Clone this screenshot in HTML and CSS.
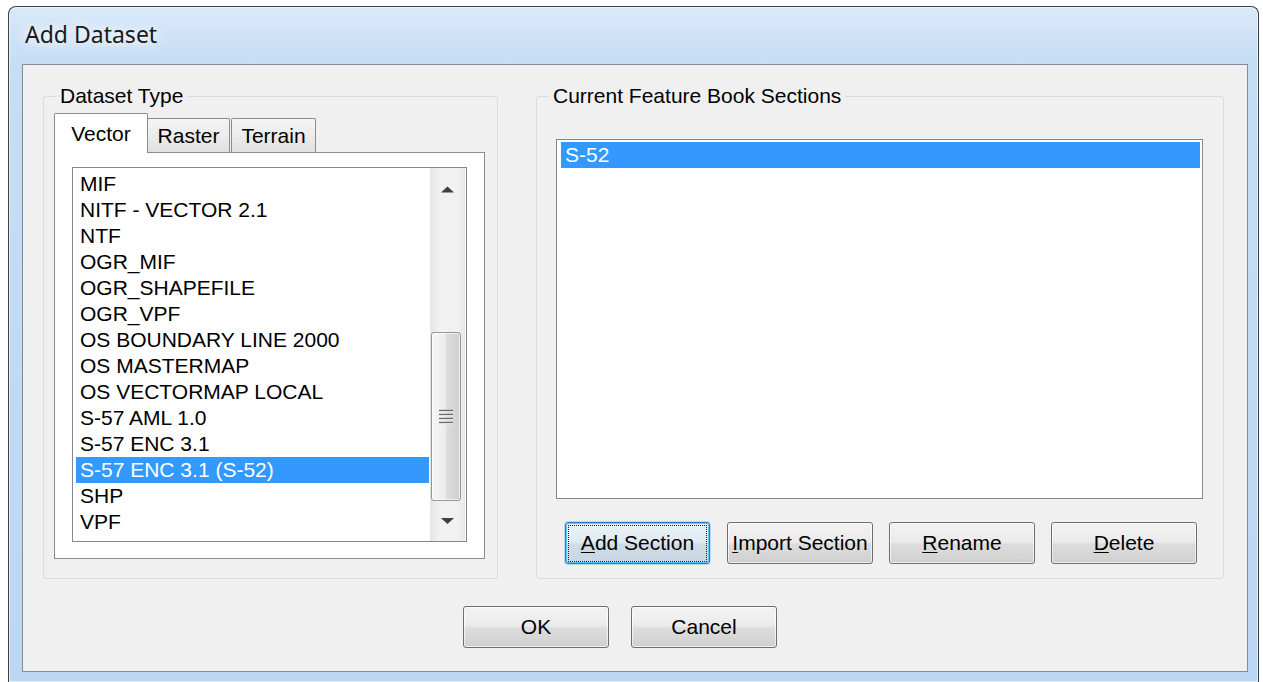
FILE: index.html
```html
<!DOCTYPE html>
<html lang="en">
<head>
<meta charset="utf-8">
<title>Add Dataset</title>
<link rel="stylesheet" href="styles.css">
</head>
<body>
<div class="window">
  <div class="titlebar"><span class="title">Add Dataset</span></div>
  <div class="client">
    <div class="groups">
      <fieldset class="group group-type">
        <legend>Dataset Type</legend>
        <div class="group-body type-body">
          <div class="tabs">
            <div class="tab active">Vector</div>
            <div class="tab tab-raster">Raster</div>
            <div class="tab tab-terrain">Terrain</div>
          </div>
          <div class="tab-panel">
            <div class="listbox type-list">
              <div class="items">
                <div class="item">MIF</div>
                <div class="item">NITF - VECTOR 2.1</div>
                <div class="item">NTF</div>
                <div class="item">OGR_MIF</div>
                <div class="item">OGR_SHAPEFILE</div>
                <div class="item">OGR_VPF</div>
                <div class="item">OS BOUNDARY LINE 2000</div>
                <div class="item">OS MASTERMAP</div>
                <div class="item">OS VECTORMAP LOCAL</div>
                <div class="item">S-57 AML 1.0</div>
                <div class="item">S-57 ENC 3.1</div>
                <div class="item selected">S-57 ENC 3.1 (S-52)</div>
                <div class="item">SHP</div>
                <div class="item">VPF</div>
              </div>
              <div class="vscroll">
                <div class="sb-btn">
                  <svg width="35" height="34" viewBox="0 0 35 34"><polygon points="11,24.5 17.5,18.5 24,24.5" fill="#3f3f3f"/></svg>
                </div>
                <div class="sb-gap"></div>
                <div class="sb-thumb">
                  <svg width="16" height="16" viewBox="0 0 16 16">
                    <g stroke="#fff" stroke-width="1.2"><line x1="1" y1="2.6" x2="15" y2="2.6"/><line x1="1" y1="6.6" x2="15" y2="6.6"/><line x1="1" y1="10.6" x2="15" y2="10.6"/><line x1="1" y1="14.6" x2="15" y2="14.6"/></g>
                    <g stroke="#6c6c6c" stroke-width="1.4"><line x1="1" y1="1.5" x2="15" y2="1.5"/><line x1="1" y1="5.5" x2="15" y2="5.5"/><line x1="1" y1="9.5" x2="15" y2="9.5"/><line x1="1" y1="13.5" x2="15" y2="13.5"/></g>
                  </svg>
                </div>
                <div class="sb-fill"></div>
                <div class="sb-btn">
                  <svg width="35" height="34" viewBox="0 0 35 34"><polygon points="11,11 24,11 17.5,17" fill="#3f3f3f"/></svg>
                </div>
              </div>
            </div>
          </div>
        </div>
      </fieldset>
      <fieldset class="group group-sections">
        <legend>Current Feature Book Sections</legend>
        <div class="group-body sections-body">
          <div class="listbox section-list">
            <div class="items">
              <div class="item selected">S-52</div>
            </div>
          </div>
          <div class="section-buttons">
            <button class="btn default"><span class="focus-ring"><u>A</u>dd Section</span></button>
            <button class="btn"><u>I</u>mport Section</button>
            <button class="btn"><u>R</u>ename</button>
            <button class="btn"><u>D</u>elete</button>
          </div>
        </div>
      </fieldset>
    </div>
    <div class="dialog-buttons">
      <button class="btn">OK</button>
      <button class="btn">Cancel</button>
    </div>
  </div>
</div>
</body>
</html>
```
FILE: styles.css
```css
* {
  box-sizing: border-box;
}

html,
body {
  margin: 0;
  height: 100%;
  overflow: hidden;
  background: #ffffff;
}

body {
  font-family: "Liberation Sans", Arial, sans-serif;
  font-size: 21px;
  color: #000000;
}

/* Window frame with glass title bar */
.window {
  margin: 6px 0 0 8px;
  width: 1251px;
  height: 676px;
  padding: 0 10px 0 13px;
  border: 1px solid #3a4049;
  border-bottom: 0;
  border-radius: 8px 8px 0 0;
  background: linear-gradient(180deg, #d9e9f9 0px, #c6ddf4 56px, #bcd7f3 100%);
  box-shadow: inset 0 0 0 1px rgba(255, 255, 255, 0.55);
}

.titlebar {
  padding: 11px 0 14px 3px;
}

.title {
  display: inline-block;
  font-family: "Noto Sans", "Open Sans", sans-serif;
  font-size: 23px;
  line-height: 32px;
  color: #1a1a1a;
  text-shadow: 0 0 8px rgba(255, 255, 255, 0.95), 0 0 14px rgba(255, 255, 255, 0.9);
}

/* Dialog client area */
.client {
  border: 1px solid #828d99;
  background: #f0f0f0;
  padding: 19px 23px 23px 20px;
}

.groups {
  display: flex;
  gap: 38px;
}

.group {
  margin: 0;
  padding: 0;
  min-width: 0;
  border: 1px solid #d3dde4;
  border-radius: 3px;
}

.group legend {
  margin-left: 12px;
  padding: 0 4px;
  line-height: 24px;
}

.group-type {
  width: 455px;
}

.group-sections {
  width: 688px;
}

.type-body {
  padding: 5px 12px 19px 10px;
}

.sections-body {
  padding: 31px 20px 14px 19px;
}

/* Tabs */
.tabs {
  display: flex;
  align-items: flex-end;
  height: 39px;
}

.tab {
  height: 34px;
  display: flex;
  align-items: center;
  justify-content: center;
  border: 1px solid #898c95;
  border-bottom: 0;
  border-radius: 2px 2px 0 0;
  background: linear-gradient(180deg, #f5f5f5 0%, #ececec 50%, #e0e0e0 100%);
}

.tab.active {
  width: 94px;
  height: 40px;
  margin-bottom: -1px;
  background: #ffffff;
  position: relative;
  z-index: 1;
}

.tab-raster {
  width: 83px;
  margin-left: -1px;
}

.tab-terrain {
  width: 85px;
  margin-left: 1px;
}

.tab-panel {
  border: 1px solid #898c95;
  background: #ffffff;
  padding: 14px 17px 16px;
}

/* List boxes */
.listbox {
  display: flex;
  border: 1px solid #828790;
  background: #ffffff;
}

.items {
  flex: 1;
  overflow: hidden;
}

.item {
  height: 26px;
  line-height: 26px;
  padding-left: 4px;
  white-space: nowrap;
}

.item.selected {
  background: #3399ff;
  color: #ffffff;
}

.type-list {
  height: 375px;
}

.type-list .items {
  margin: 0 1px 0 3px;
  padding-top: 3px;
}

.section-list {
  height: 360px;
}

.section-list .items {
  margin: 0 2px 0 4px;
  padding-top: 2px;
}

/* Vertical scroll bar */
.vscroll {
  width: 35px;
  margin-right: 1px;
  display: flex;
  flex-direction: column;
  background: linear-gradient(90deg, #e4e4e4 0%, #f1f1f1 25%, #f1f1f1 75%, #e9e9e9 100%);
}

.sb-btn {
  height: 34px;
  flex: none;
}

.sb-btn svg {
  display: block;
}

.sb-gap {
  height: 130px;
  flex: none;
}

.sb-thumb {
  height: 169px;
  flex: none;
  margin: 0 4px 0 1px;
  border: 1px solid #979797;
  border-radius: 3px;
  background: linear-gradient(90deg, #f6f6f6 0%, #ededed 45%, #dcdcdc 55%, #cfcfcf 100%);
  box-shadow: inset 0 0 0 1px rgba(255, 255, 255, 0.6);
  display: flex;
  align-items: center;
  justify-content: center;
}

.sb-thumb svg {
  display: block;
}

.sb-fill {
  flex: 1;
}

/* Push buttons */
.btn {
  width: 146px;
  height: 42px;
  padding: 0;
  border: 1px solid #707070;
  border-radius: 3px;
  background: linear-gradient(180deg, #f3f3f3 0%, #ebebeb 48%, #dddddd 52%, #d0d0d0 100%);
  box-shadow: inset 0 0 0 1px rgba(255, 255, 255, 0.65);
  font-family: inherit;
  font-size: 21px;
  color: #000000;
  display: flex;
  align-items: center;
  justify-content: center;
}

.btn u {
  text-decoration-thickness: 1px;
  text-underline-offset: 2px;
}

.btn.default {
  width: 145px;
  border-color: #2c7dc0;
  background: linear-gradient(180deg, #eaf2f8 0%, #e0eaf1 48%, #d0dde7 52%, #c6d6e2 100%);
  box-shadow: inset 0 0 0 1px #5ec8f5, 0 0 0 1px rgba(90, 170, 230, 0.35);
}

.focus-ring {
  display: flex;
  align-items: center;
  justify-content: center;
  width: 137px;
  height: 35px;
  outline: 1px dotted #222222;
}

.section-buttons {
  display: flex;
  gap: 16px;
  margin: 23px 0 0 9px;
}

.section-buttons .btn.default + .btn {
  margin-left: 1px;
}

.dialog-buttons {
  display: flex;
  gap: 22px;
  margin-top: 27px;
  padding-left: 420px;
}
```
